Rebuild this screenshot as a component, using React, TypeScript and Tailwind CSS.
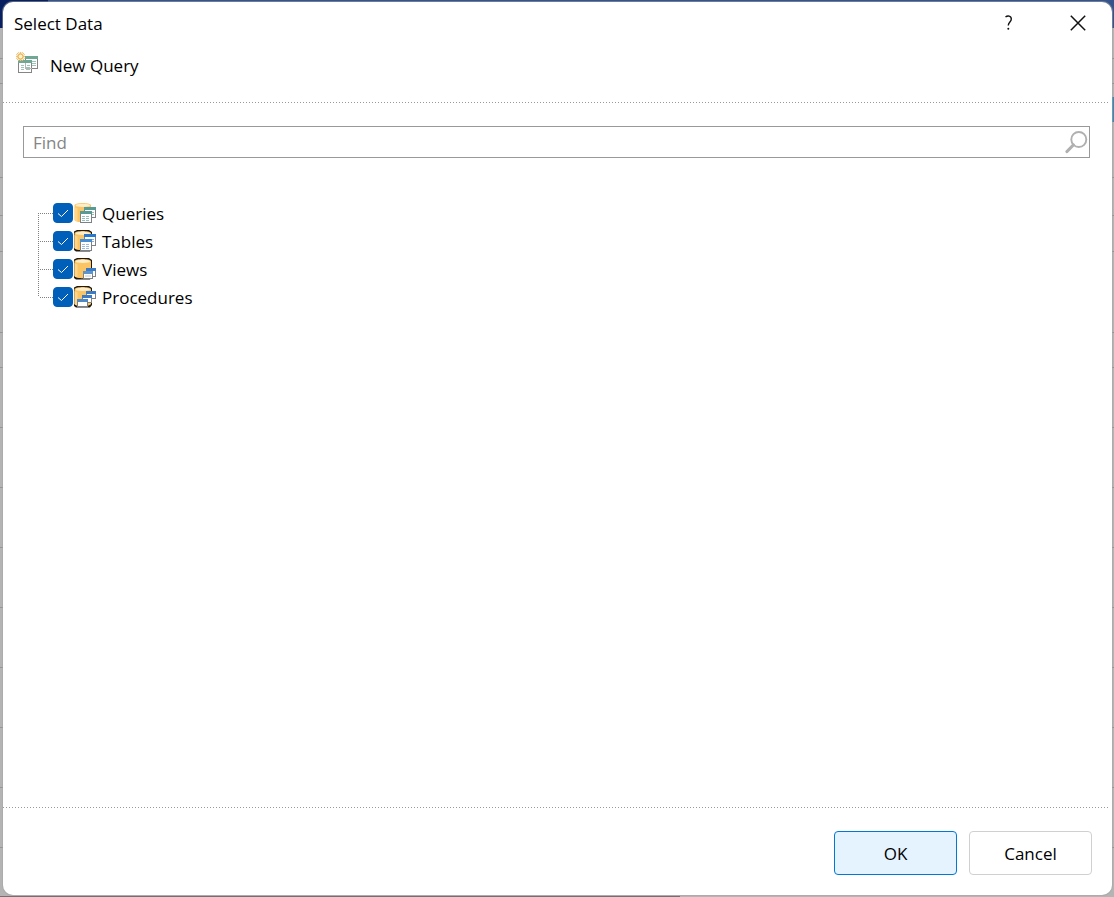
import { useState } from "react";

type Kind = "queries" | "tables" | "views" | "procedures";

const ITEMS: { kind: Kind; label: string }[] = [
  { kind: "queries", label: "Queries" },
  { kind: "tables", label: "Tables" },
  { kind: "views", label: "Views" },
  { kind: "procedures", label: "Procedures" },
];

function MiniWindow({
  x,
  y,
  w,
  h,
  color,
  bar = 3,
}: {
  x: number;
  y: number;
  w: number;
  h: number;
  color: string;
  bar?: number;
}) {
  return (
    <g>
      <rect x={x} y={y} width={w} height={h} fill="#7d8184" />
      <rect x={x + 1} y={y + 1} width={w - 2} height={h - 2} fill="#fff" />
      <rect x={x} y={y} width={w} height={bar} fill={color} />
    </g>
  );
}

function Cells({ x, y, color }: { x: number; y: number; color: string }) {
  return (
    <g fill={color}>
      {[0, 2, 4].map((dy) => (
        <g key={dy}>
          <rect x={x} y={y + dy} width="3" height="1" />
          <rect x={x + 4} y={y + dy} width="3" height="1" />
        </g>
      ))}
    </g>
  );
}

function DatabaseIcon({ kind }: { kind: Kind }) {
  const outlined = kind !== "queries";
  return (
    <svg width="22" height="22" viewBox="0 0 22 22" aria-hidden="true">
      {outlined && <path d="M0 1.500L3 0H15L18 2V19L16 21.500H2L0 20Z" fill="#1d1a16" />}
      <path d="M.5 3C2 .2 15.500 .2 17 3V18C15.500 21 2 21 .5 18Z" fill="#fcc564" />
      <path d="M.5 4.500C1 5.500 2 6 3.500 6.400V19.600C2 19.200 .9 18.700 .5 18Z" fill="#ffd58a" />
      <ellipse cx="8.800" cy="3.400" rx="7.200" ry="1.700" fill="#ffedc9" />
      <g shapeRendering="crispEdges">
        {kind === "queries" && (
          <>
            <MiniWindow x={10} y={5} w={12} h={11} color="#579b94" />
            <rect x="18" y="10" width="2" height="1" fill="#94bfae" />
            <rect x="18" y="12" width="2" height="1" fill="#94bfae" />
            <MiniWindow x={6} y={9} w={12} h={12} color="#579b94" />
            <Cells x={8} y={14} color="#94bfb6" />
          </>
        )}
        {kind === "tables" && (
          <>
            <MiniWindow x={10} y={4} w={12} h={12} color="#2879ce" />
            <rect x="18" y="9" width="2" height="1" fill="#87afdc" />
            <rect x="18" y="11" width="2" height="1" fill="#87afdc" />
            <MiniWindow x={6} y={9} w={12} h={12} color="#438ed5" />
            <Cells x={8} y={14} color="#9abbdc" />
          </>
        )}
        {kind === "views" && (
          <>
            <MiniWindow x={12} y={10} w={10} h={9} color="#3b7bc6" />
            <MiniWindow x={9} y={13} w={10} h={8} color="#5e94cb" />
            <rect x="11" y="17" width="6" height="2" fill="#dbe6ee" />
          </>
        )}
        {kind === "procedures" && (
          <>
            <MiniWindow x={12} y={5} w={10} h={8} color="#3b7bc6" />
            <MiniWindow x={8} y={9} w={10} h={8} color="#3b7bc6" />
            <MiniWindow x={3} y={13} w={11} h={8} color="#4d89c9" />
          </>
        )}
      </g>
    </svg>
  );
}

function NewQueryIcon() {
  return (
    <svg width="22" height="22" viewBox="0 0 22 22" shapeRendering="crispEdges" aria-hidden="true">
      <rect x="9.500" y="4.500" width="12" height="12" fill="#fff" stroke="#858585" />
      <rect x="9" y="4" width="13" height="3" fill="#6fa895" />
      <path d="M16 9.500h4M16 11.500h4M16 13.500h4" stroke="#9cc5b5" />
      <rect x="2.500" y="8.500" width="13" height="12" fill="#fff" stroke="#858585" />
      <rect x="2" y="8" width="14" height="3" fill="#6fa895" />
      <path d="M5 13.500h3M11 13.500h3M5 15.500h3M10 15.500h4M5 17.500h3M10 17.500h4" stroke="#9cc5b5" />
      <path d="M9.500 11v5.500h6" fill="none" stroke="#b5b5b5" />
      <g shapeRendering="auto">
        <path
          d="M4.500 0v9M0 4.500h9M1 1l7 7M8 1L1 8M2.500 0l4 9M6.500 0l-4 9M0 2.500l9 4M0 6.500l9-4"
          stroke="#f0c274"
          strokeWidth="1"
        />
        <circle cx="4.500" cy="4.500" r="2.400" fill="#fff2d0" stroke="#efb755" />
      </g>
    </svg>
  );
}

function DottedRule() {
  return <div className="mr-0.5 h-px bg-[repeating-linear-gradient(90deg,#999_0_1px,transparent_1px_3px)]" />;
}

function TreeRow({
  kind,
  label,
  first,
  last,
  checked,
  onToggle,
}: {
  kind: Kind;
  label: string;
  first: boolean;
  last: boolean;
  checked: boolean;
  onToggle: () => void;
}) {
  return (
    <li className="flex h-7 items-center">
      <span className="flex h-7 w-[15px] shrink-0 items-center">
        <span
          className={`w-px shrink-0 bg-[repeating-linear-gradient(180deg,#808080_0_1px,transparent_1px_2px)] ${
            first ? "h-3.5 self-end" : last ? "h-3.5 self-start" : "h-7"
          }`}
        />
        <span className="h-px grow bg-[repeating-linear-gradient(90deg,transparent_0_1px,#808080_1px_2px)]" />
      </span>
      <label className="flex items-center leading-7">
        <span className="grid size-5 place-items-center">
          <input
            type="checkbox"
            checked={checked}
            onChange={onToggle}
            className="col-start-1 row-start-1 size-5 appearance-none rounded-[4px] border border-[#868686] bg-white checked:border-[#005fb8] checked:bg-[#005fb8]"
          />
          {checked && (
            <svg
              width="12"
              height="12"
              viewBox="0 0 12 12"
              className="pointer-events-none col-start-1 row-start-1"
              aria-hidden="true"
            >
              <path d="M1 6.500L4.500 9.500L11 3" fill="none" stroke="#fff" strokeWidth="1" />
            </svg>
          )}
        </span>
        <span className="mr-1.5 ml-px">
          <DatabaseIcon kind={kind} />
        </span>
        <span className="pt-px">{label}</span>
      </label>
    </li>
  );
}

export default function App() {
  const [find, setFind] = useState("");
  const [checked, setChecked] = useState<Record<Kind, boolean>>({
    queries: true,
    tables: true,
    views: true,
    procedures: true,
  });

  return (
    <div className="flex min-h-screen flex-col bg-[#b4b4b4] bg-[linear-gradient(90deg,#082060_0_48px,#35548c_48px_100%),linear-gradient(90deg,transparent_50%,#3c87b4_50%),linear-gradient(90deg,#707070_0_680px,#b4b4b4_680px),linear-gradient(180deg,transparent_58px,#959595_58px_59px,transparent_59px_83px,#959595_83px_84px,transparent_84px_177px,#959595_177px_178px,transparent_178px_215px,#959595_215px_216px,transparent_216px_251px,#959595_251px_252px,transparent_252px_332px,#959595_332px_333px,transparent_333px),repeating-linear-gradient(180deg,transparent_0_7px,#959595_7px_8px,transparent_8px_60px)] bg-[length:100%_28px,100%_25px,100%_1px,100%_360px,100%_537px] bg-[position:0_0,0_97px,0_100%,0_0,0_360px] bg-no-repeat pt-0.5 pr-0.5 pb-0.5 pl-[3px] font-['Open_Sans','Noto_Sans',sans-serif] text-[17px] text-black">
      <div
        role="dialog"
        aria-labelledby="dialog-title"
        className="flex grow flex-col rounded-[10px] bg-white shadow-[0_0_0_1px_#a3a3a380]"
      >
        <header className="flex h-[42px] items-center pl-[11px]">
          <h1 id="dialog-title" className="grow pt-0.5 leading-6">
            Select Data
          </h1>
          <button type="button" aria-label="Help" className="flex h-10 w-[70px] items-center justify-center">
            <svg width="10" height="16" viewBox="0 0 10 16" aria-hidden="true">
              <path
                d="M1.500 2C3.500 .4 7.300 .6 7.300 4C7.300 7 4.300 7 4.300 10.500"
                fill="none"
                stroke="#111"
                strokeWidth="1.400"
              />
              <circle cx="4.300" cy="13.700" r="1" fill="#111" />
            </svg>
          </button>
          <button type="button" aria-label="Close" className="flex h-10 w-[68px] items-center justify-center">
            <svg width="16" height="16" viewBox="0 0 16 16" aria-hidden="true">
              <path d="M.8 .8L15.200 15.200M15.200 .8L.8 15.200" stroke="#111" strokeWidth="1.500" />
            </svg>
          </button>
        </header>

        <div className="flex h-[58px] items-start pt-1 pl-[13px]">
          <button type="button" className="flex items-start gap-3 pt-1 leading-7">
            <NewQueryIcon />
            <span>New Query</span>
          </button>
        </div>
        <DottedRule />

        <main className="grow pt-[23px] pr-[22px] pl-5">
          <div className="flex h-8 items-center border border-[#999] pr-px pl-[9px]">
            <input
              type="text"
              aria-label="Find"
              placeholder="Find"
              value={find}
              onChange={(e) => setFind(e.target.value)}
              className="min-w-0 grow bg-transparent pt-0.5 leading-6 outline-none placeholder:text-[#858585]"
            />
            <button type="button" aria-label="Search">
              <svg width="23" height="23" viewBox="0 0 23 23" fill="none" stroke="#b0b0b0" aria-hidden="true">
                <circle cx="13.800" cy="8.500" r="7.500" strokeWidth="1.900" />
                <path d="M8.300 14L2 20.500" strokeWidth="3.200" strokeLinecap="round" />
              </svg>
            </button>
          </div>

          <ul className="mt-[41px] pl-[15px]">
            {ITEMS.map((item, i) => (
              <TreeRow
                key={item.kind}
                kind={item.kind}
                label={item.label}
                first={i === 0}
                last={i === ITEMS.length - 1}
                checked={checked[item.kind]}
                onToggle={() => setChecked((c) => ({ ...c, [item.kind]: !c[item.kind] }))}
              />
            ))}
          </ul>
        </main>

        <DottedRule />
        <footer className="flex justify-end gap-3 pt-[23px] pr-5 pb-5">
          <button
            type="button"
            className="h-11 w-[123px] rounded-[4px] border border-[#0078d4] bg-[#e5f3ff] pt-px leading-6"
          >
            OK
          </button>
          <button
            type="button"
            className="h-11 w-[123px] rounded-[4px] border border-[#d0d0d0] bg-white pt-px leading-6"
          >
            Cancel
          </button>
        </footer>
      </div>
    </div>
  );
}
